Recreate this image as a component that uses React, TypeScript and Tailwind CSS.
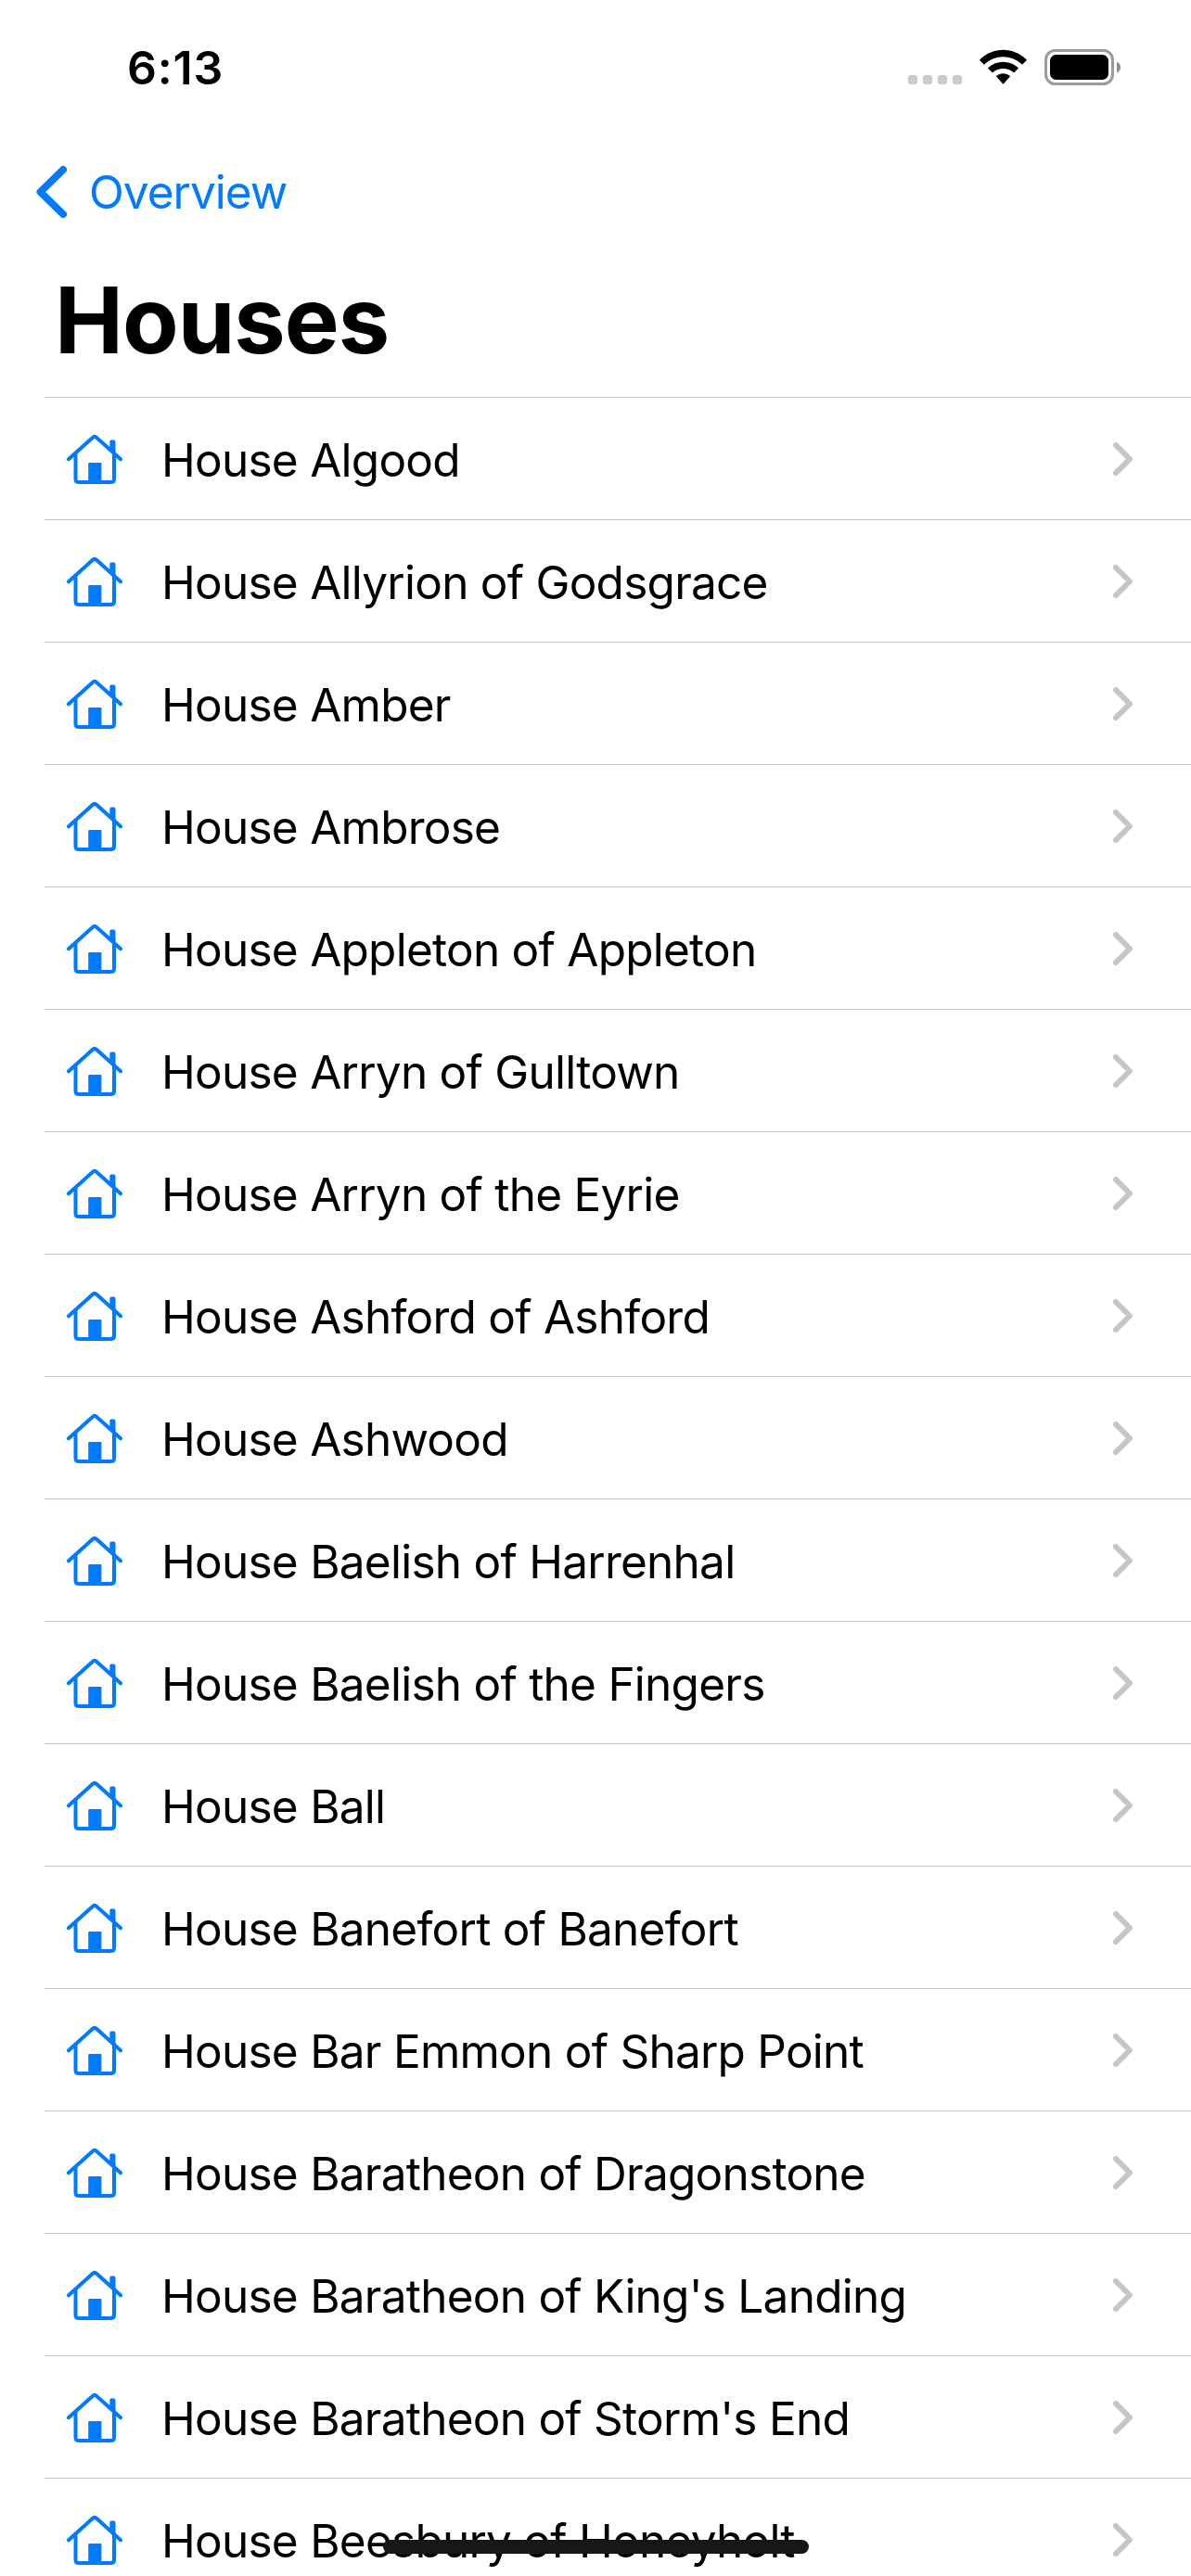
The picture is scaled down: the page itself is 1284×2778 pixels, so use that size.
const houses = [
  "House Algood",
  "House Allyrion of Godsgrace",
  "House Amber",
  "House Ambrose",
  "House Appleton of Appleton",
  "House Arryn of Gulltown",
  "House Arryn of the Eyrie",
  "House Ashford of Ashford",
  "House Ashwood",
  "House Baelish of Harrenhal",
  "House Baelish of the Fingers",
  "House Ball",
  "House Banefort of Banefort",
  "House Bar Emmon of Sharp Point",
  "House Baratheon of Dragonstone",
  "House Baratheon of King's Landing",
  "House Baratheon of Storm's End",
  "House Beesbury of Honeyholt",
];

function HouseIcon() {
  return (
    <svg className="h-[54px] w-[60px] shrink-0" viewBox="0 0 60 54" fill="none" stroke="#007aff" strokeWidth="4" strokeLinecap="round" strokeLinejoin="round">
      <path d="M2 27.3 L28.3 3.5 Q30 2.1 31.7 3.5 L58 27.3" />
      <path d="M9.5 21 V48.5 Q9.5 52 13 52 H47.5 Q51 52 51 48.5 V21" />
      <path d="M23.2 51 V32.2 Q23.2 31 24.4 31 H36.2 Q37.4 31 37.4 32.2 V51 Z" fill="#007aff" stroke="none" />
      <path d="M46.3 17 V8 Q46.3 6.5 47.8 6.5 H51 Q52.5 6.5 52.5 8 V22.5 Z" fill="#007aff" stroke="none" />
    </svg>
  );
}

function StatusBar() {
  return (
    <div className="flex h-[144px] shrink-0 items-start justify-between pl-[137px] pr-[76px]">
      <time className="mt-[43px] text-[50px] leading-[60px] font-semibold tracking-[0.8px]">6:13</time>
      <div className="flex items-start">
        <div className="mt-[81px] mr-[19px] flex gap-[6px]">
          {[0, 1, 2, 3].map((dot) => (
            <span key={dot} className="size-[10px] rounded-[3px] bg-[#cbcbcb]" />
          ))}
        </div>
        <svg className="mt-[53px] mr-[19px] h-[39px] w-[51px]" viewBox="0 0 51 39" fill="#000">
          <path d="M0.4 11.2 C14.5 -2.8 36.5 -2.8 50.6 11.2 Q51 11.7 50.6 12.2 L46.5 16.2 Q46 16.6 45.5 16.2 C34.5 5.5 16.5 5.5 5.5 16.2 Q5 16.6 4.5 16.2 L0.4 12.2 Q0 11.7 0.4 11.2Z" />
          <path d="M9.4 20 C18.5 11.5 32.5 11.5 41.6 20 Q42.1 20.5 41.6 21 L37.5 25 Q37 25.4 36.5 25 C30.5 19.6 20.5 19.6 14.5 25 Q14 25.4 13.5 25 L9.4 21 Q8.9 20.5 9.4 20Z" />
          <path d="M18.3 28.8 C22.5 25.3 28.5 25.3 32.7 28.8 Q33.2 29.3 32.7 29.8 L26 37.3 Q25.5 37.8 25 37.3 L18.3 29.8 Q17.8 29.3 18.3 28.8Z" />
        </svg>
        <svg className="mt-[53px] h-[39px] w-[82px]" viewBox="0 0 82 39">
          <rect x="1.5" y="1.5" width="72" height="36" rx="10" fill="none" stroke="#9b9b9b" strokeWidth="3" />
          <rect x="6" y="6" width="63" height="27" rx="6.5" fill="#000" />
          <path d="M78 13.5 Q82 15.5 82 19.5 Q82 23.5 78 25.5Z" fill="#8e8e8e" />
        </svg>
      </div>
    </div>
  );
}

export default function App() {
  return (
    <main className="relative flex h-[2778px] w-[1284px] flex-col overflow-hidden bg-white font-[Inter,sans-serif] text-black">
      <StatusBar />
      <nav className="flex h-[126px] shrink-0 items-center pl-[39px] text-[#007aff]">
        <svg className="h-[58px] w-[34px]" viewBox="0 0 34 58" fill="none" stroke="currentColor" strokeWidth="8" strokeLinecap="round" strokeLinejoin="round">
          <path d="M29 5 L4.5 29 L29 53" />
        </svg>
        <a className="ml-[23px] text-[49.5px] leading-[60px] tracking-[-1px]">Overview</a>
      </nav>
      <h1 className="h-[158px] shrink-0 pt-[15px] pl-[59px] text-[99px] leading-[120px] font-bold tracking-[-1px]">Houses</h1>
      <ul className="ml-[48px] flex flex-col">
        {houses.map((name) => (
          <li key={name} className="flex h-[132px] shrink-0 items-center border-t border-[#c6c6c8] pt-px pl-[24px] pr-[62px]">
            <HouseIcon />
            <span className="mt-px ml-[42px] flex-1 whitespace-nowrap text-[49.5px] leading-[60px] tracking-[-0.75px]">{name}</span>
            <svg className="h-[36px] w-[22px]" viewBox="0 0 22 36" fill="none" stroke="#c5c5c7" strokeWidth="6" strokeLinecap="round" strokeLinejoin="round">
              <path d="M3 3 L18 18 L3 33" />
            </svg>
          </li>
        ))}
      </ul>
      <div className="absolute top-[2739px] left-[413px] h-[15px] w-[459px] rounded-full bg-[#171717]" />
    </main>
  );
}
